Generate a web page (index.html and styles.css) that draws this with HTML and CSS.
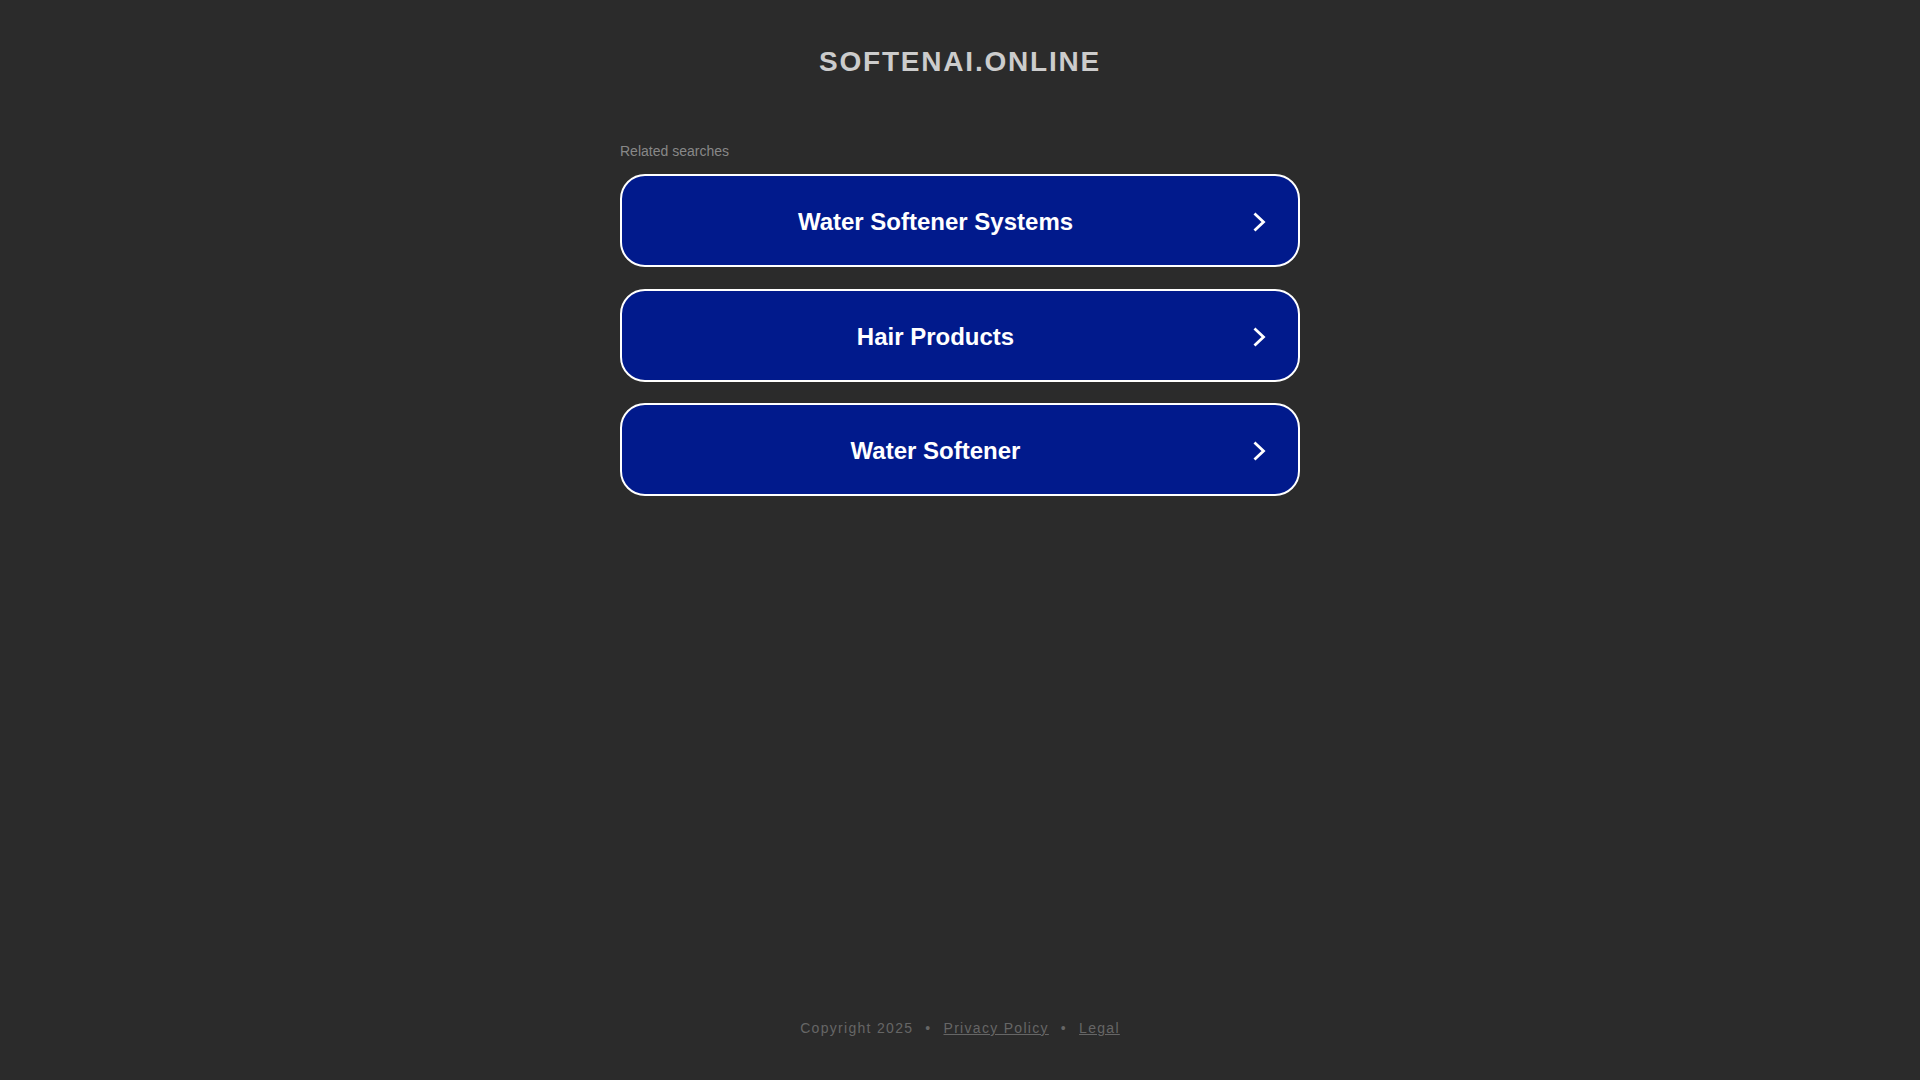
FILE: index.html
```html
<!DOCTYPE html>
<html lang="en">
<head>
<meta charset="utf-8">
<title>softenai.online</title>
<link rel="stylesheet" href="styles.css">
</head>
<body>
<div class="page">
  <header class="header">
    <h1 class="domain">SOFTENAI.ONLINE</h1>
  </header>
  <main class="main">
    <div class="related-label">Related searches</div>
    <div class="list">
      <a class="item" href="#">
        <span class="item-text">Water Softener Systems</span>
        <svg class="chev" viewBox="0 0 14 20" width="14" height="20"><path d="M2.5 2.5 L10.5 10 L2.5 17.5" fill="none" stroke="#fff" stroke-width="2.8" stroke-linecap="square" stroke-linejoin="miter"/></svg>
      </a>
      <a class="item" href="#">
        <span class="item-text">Hair Products</span>
        <svg class="chev" viewBox="0 0 14 20" width="14" height="20"><path d="M2.5 2.5 L10.5 10 L2.5 17.5" fill="none" stroke="#fff" stroke-width="2.8" stroke-linecap="square" stroke-linejoin="miter"/></svg>
      </a>
      <a class="item" href="#">
        <span class="item-text">Water Softener</span>
        <svg class="chev" viewBox="0 0 14 20" width="14" height="20"><path d="M2.5 2.5 L10.5 10 L2.5 17.5" fill="none" stroke="#fff" stroke-width="2.8" stroke-linecap="square" stroke-linejoin="miter"/></svg>
      </a>
    </div>
  </main>
  <footer class="footer">
    <span>Copyright 2025</span><span class="sep">•</span><a href="#" class="flink">Privacy Policy</a><span class="sep">•</span><a href="#" class="flink">Legal</a>
  </footer>
</div>
</body>
</html>
```

FILE: styles.css
```css
html, body {
  margin: 0;
  padding: 0;
  background: #2b2b2b;
}
body {
  font-family: "Liberation Sans", Arial, sans-serif;
}
.page {
  height: 100vh;
  display: flex;
  flex-direction: column;
  align-items: center;
}
.header {
  padding-top: 46px;
}
.domain {
  margin: 0;
  font-size: 28px;
  font-weight: bold;
  line-height: 32px;
  letter-spacing: 1.8px;
  color: #cccccc;
  text-align: center;
}
.main {
  width: 680px;
  margin-top: 65px;
}
.related-label {
  font-size: 14px;
  line-height: 16px;
  color: #888888;
  margin-bottom: 15px;
}
.list {
  display: flex;
  flex-direction: column;
  gap: 21.7px;
}
.item {
  box-sizing: border-box;
  height: 93px;
  display: flex;
  align-items: center;
  padding: 3px 31px 0 20px;
  background: #011a8c;
  border: 2px solid #ffffff;
  border-radius: 25px;
  text-decoration: none;
  color: #ffffff;
}
.item-text {
  flex: 1;
  text-align: center;
  font-size: 24px;
  font-weight: bold;
  line-height: 28px;
}
.chev {
  margin-left: 24px;
  flex: none;
  display: block;
}
.footer {
  margin-top: auto;
  padding-bottom: 44px;
  font-size: 14px;
  line-height: 16px;
  letter-spacing: 1.3px;
  color: #666666;
}
.sep {
  margin: 0 12px;
}
.flink {
  color: #666666;
  text-decoration: underline;
}
```
